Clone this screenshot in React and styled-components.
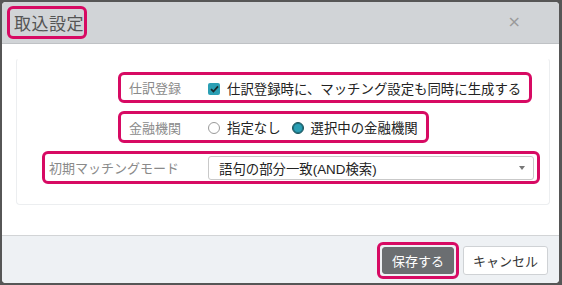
import React from 'react'
import styled, { createGlobalStyle } from 'styled-components'

const Global = createGlobalStyle`
  * { box-sizing: border-box; }
  html, body { margin: 0; padding: 0; background: #565656; }
  body {
    font-family: "Liberation Sans", "Noto Sans CJK JP", sans-serif;
    width: 562px;
    height: 285px;
    overflow: hidden;
  }
`

const Dialog = styled.div`
  margin: 2px 0 0 2px;
  width: 557px;
  height: 281px;
  background: #fff;
  border-radius: 4px;
  overflow: hidden;
  display: flex;
  flex-direction: column;
`

const Header = styled.div`
  height: 42px;
  background: #d1d4d7;
  border-bottom: 1px solid #bfc2c5;
  display: flex;
  align-items: flex-start;
  justify-content: space-between;
  padding: 4px 38px 0 5px;
`

const Mark = styled.div`
  border: 3px solid #d70a63;
  border-radius: 6px;
  display: flex;
  align-items: center;
`

const TitleMark = styled(Mark)`
  width: 80px;
  height: 33px;
  padding-left: 4px;
`

const Title = styled.span`
  font-size: 17px;
  color: #555;
  letter-spacing: 0.5px;
`

const Close = styled.span`
  margin-top: 6px;
  font-size: 16px;
  color: #9a9a9a;
  font-family: "DejaVu Sans", sans-serif;
`

const Body = styled.div`
  flex: 1;
  padding: 14px 9px 0 14px;
`

const Panel = styled.div`
  border: 1px solid #eceef0;
  border-top-color: #fff;
  border-radius: 4px;
  padding: 13px 4px 20px 24px;
  display: flex;
  flex-direction: column;
  gap: 8px;
`

const Row = styled(Mark)`
  align-self: flex-start;
  height: ${p => p.$h}px;
  margin-left: ${p => p.$ml}px;
  padding: 0 ${p => p.$pr}px 0 ${p => p.$pl}px;
  width: ${p => (p.$w ? `${p.$w}px` : 'auto')};
`

const Label = styled.span`
  width: ${p => p.$w}px;
  flex: none;
  font-size: 13px;
  color: #8a8a8a;
`

const Option = styled.label`
  display: inline-flex;
  align-items: center;
  font-size: 13.4px;
  color: #222;
  margin-right: ${p => p.$mr || 0}px;
`

const Check = styled.span`
  width: 12px;
  height: 12px;
  border-radius: 2px;
  background: #2b9fb4;
  margin: 2px 7px 0 0;
  display: inline-flex;
  align-items: center;
  justify-content: center;
`

const Radio = styled.span`
  width: 12px;
  height: 12px;
  border-radius: 50%;
  border: 1px solid ${p => (p.$on ? '#1c4f57' : '#9a9a9a')};
  background: ${p => (p.$on ? '#2b9fb4' : '#fff')};
  box-shadow: ${p => (p.$on ? 'inset 0 0 0 1px #1d6f7c' : 'none')};
  margin: 2px 7px 0 0;
  flex: none;
`

const Select = styled.div`
  flex: 1;
  height: 24px;
  border: 1px solid #c9c9c9;
  border-radius: 3px;
  background: #fff;
  display: flex;
  align-items: center;
  justify-content: space-between;
  padding: 0 8px 0 10px;
  font-size: 13.4px;
  color: #222;
`

const Caret = styled.span`
  width: 0;
  height: 0;
  border-left: 3px solid transparent;
  border-right: 3px solid transparent;
  border-top: 4px solid #777;
`

const Footer = styled.div`
  height: 48px;
  background: #eef1f4;
  border-top: 1px solid #d2d4d6;
  display: flex;
  align-items: center;
  justify-content: flex-end;
  gap: 4px;
  padding: 2px 11px 0 0;
`

const SaveMark = styled(Mark)`
  padding: 2px;
`

const Button = styled.button`
  height: ${p => (p.$primary ? 27 : 29)}px;
  width: ${p => (p.$primary ? 72 : 85)}px;
  border-radius: 3px;
  border: 1px solid ${p => (p.$primary ? '#6a6d70' : '#cfd2d5')};
  background: ${p => (p.$primary ? '#6b6e71' : '#fff')};
  color: ${p => (p.$primary ? '#fff' : '#333')};
  font-family: "Liberation Sans", "Noto Sans CJK JP", sans-serif;
  font-size: 13px;
  padding: 0;
`

export default function App() {
  return (
    <>
      <Global />
      <Dialog>
        <Header>
          <TitleMark>
            <Title>取込設定</Title>
          </TitleMark>
          <Close>×</Close>
        </Header>
        <Body>
          <Panel>
            <Row $h={31} $ml={77} $pl={8} $pr={8}>
              <Label $w={79}>仕訳登録</Label>
              <Option>
                <Check>
                  <svg width="9" height="8" viewBox="0 0 9 8">
                    <path d="M1 4.2 L3.4 6.5 L8 1.3" stroke="#1b2a2e" strokeWidth="1.8" fill="none" />
                  </svg>
                </Check>
                仕訳登録時に、マッチング設定も同時に生成する
              </Option>
            </Row>
            <Row $h={32} $ml={77} $pl={8} $pr={8}>
              <Label $w={79}>金融機関</Label>
              <Option $mr={11}>
                <Radio />
                指定なし
              </Option>
              <Option>
                <Radio $on />
                選択中の金融機関
              </Option>
            </Row>
            <Row $h={33} $ml={1} $pl={4} $pr={3} $w={498}>
              <Label $w={159}>初期マッチングモード</Label>
              <Select>
                <span>語句の部分一致(AND検索)</span>
                <Caret />
              </Select>
            </Row>
          </Panel>
        </Body>
        <Footer>
          <SaveMark>
            <Button $primary>保存する</Button>
          </SaveMark>
          <Button>キャンセル</Button>
        </Footer>
      </Dialog>
    </>
  )
}
